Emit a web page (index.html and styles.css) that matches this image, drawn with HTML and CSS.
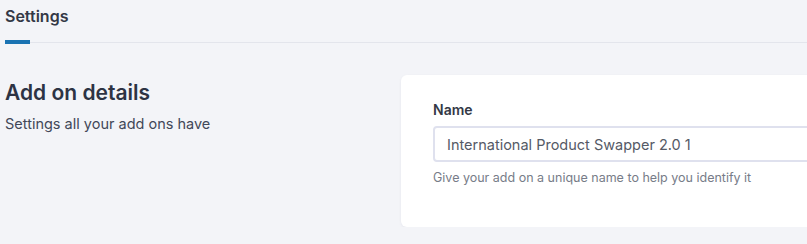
FILE: index.html
```html
<!DOCTYPE html>
<html lang="en">
<head>
    <meta charset="UTF-8">
    <meta name="viewport" content="width=device-width, initial-scale=1.0">
    <title>Settings</title>
    <link rel="stylesheet" href="styles.css">
</head>
<body>
    <div class="page">
        <div class="tabs">
            <div class="tab active">Settings</div>
        </div>

        <div class="section">
            <div class="section-info">
                <h2>Add on details</h2>
                <p>Settings all your add ons have</p>
            </div>
            <div class="card">
                <label class="field-label" for="name">Name</label>
                <input class="field-input" id="name" type="text" value="International Product Swapper 2.0 1">
                <div class="field-help">Give your add on a unique name to help you identify it</div>
            </div>
        </div>
    </div>
</body>
</html>
```

FILE: styles.css
```css
body {
    font-family: Inter, "Noto Sans", sans-serif;
    margin: 0; background: #f3f4f8; color: #2f3545;
    overflow: hidden;
}
.page { padding: 0 0 0 5px; width: 1100px; }
.tabs { border-bottom: 1px solid #e3e5ec; display: flex; }
.tab {
    font-size: 16px; font-weight: 600; color: #333846;
    padding: 6px 0 16px 0; position: relative;
}
.tab.active::after {
    content: ""; position: absolute; left: 0; bottom: -2px;
    width: 25px; height: 4px; background: #1a73b3;
}
.section { display: grid; grid-template-columns: 396px 1fr; margin-top: 32px; }
.section-info h2 { margin: 5px 0 0 0; font-size: 21px; font-weight: 600; color: #2d3344; }
.section-info p { margin: 10px 0 0 0; font-size: 14.5px; color: #424858; }
.card {
    background: white; border-radius: 6px; padding: 26px 32px 42px 32px;
    box-shadow: 0 1px 3px rgba(30,40,80,0.06);
}
.field-label { display: block; font-size: 14px; font-weight: 600; color: #333846; margin-bottom: 8px; }
.field-input {
    display: block; width: 600px; height: 36px; box-sizing: border-box;
    border: 2px solid #dfe1ee; border-radius: 4px; padding: 0 12px;
    font-family: inherit; font-size: 14.5px; color: #555a66; background: white;
}
.field-help { font-size: 12.5px; color: #777c88; margin-top: 8px; }
```
